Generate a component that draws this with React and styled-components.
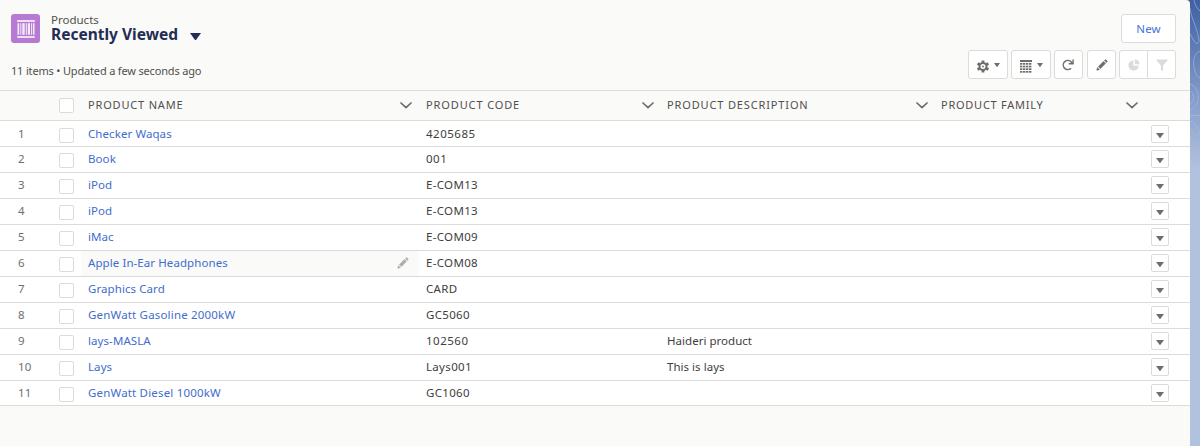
import React from 'react';
import styled, { createGlobalStyle } from 'styled-components';

const Global = createGlobalStyle`
  * { box-sizing: border-box; }
  body { margin: 0; font-family: "Noto Sans", "Open Sans", sans-serif; font-size: 11.5px; color: #3e3e3c; }
  svg { display: block; flex: none; }
`;

const Page = styled.div`
  position: relative;
  display: flex;
  height: 446px;
  overflow: hidden;
  background: linear-gradient(180deg, #3f60a4 0px, #6884ba 60px, #859dca 100px, #a3b6d8 145px, #b0c2de 170px);
`;
const Contours = styled.svg`
  position: absolute;
  top: 0;
  right: 0;
`;
const Panel = styled.main`
  position: relative;
  width: 1190px;
  height: 446px;
  background: #fafaf9;
  border-top-right-radius: 4px;
`;
const Header = styled.header`
  display: flex;
  justify-content: space-between;
  height: 90px;
  padding: 14px 14px 0 11px;
`;
const Heading = styled.div`
  display: flex;
  flex-direction: column;
`;
const TitleRow = styled.div`
  display: flex;
  gap: 11px;
  height: 50px;
`;
const ObjectIcon = styled.span`
  display: flex;
  align-items: center;
  justify-content: center;
  width: 29px;
  height: 29px;
  border-radius: 3px;
  background: #b67ad3;
`;
const Titles = styled.div`
  margin-top: -2px;
`;
const Kicker = styled.div`
  font-size: 11.5px;
  line-height: 15px;
  color: #514f4d;
`;
const ListName = styled.h1`
  display: flex;
  align-items: center;
  gap: 12px;
  margin: 0;
  font-size: 15.5px;
  line-height: 14px;
  font-weight: 700;
  color: #232d55;
  svg { margin-top: 4px; }
`;
const Summary = styled.div`
  font-size: 11px;
  line-height: 14px;
  letter-spacing: -0.17px;
  color: #514f4d;
`;
const Actions = styled.div`
  display: flex;
  flex-direction: column;
  align-items: flex-end;
  gap: 7px;
`;
const Button = styled.button`
  display: flex;
  align-items: center;
  justify-content: center;
  gap: 5px;
  width: ${p => p.$w}px;
  height: 29px;
  padding: 0;
  border: 1px solid #dddbda;
  border-radius: 3px;
  background: #fff;
  color: ${p => (p.$off ? '#dddbda' : '#706e6b')};
`;
const MenuTool = styled(Button)`
  padding-right: 0;
  svg:first-child { margin-top: 3px; }
`;
const RefreshTool = styled(Button)`
  padding-right: 1px;
  margin-right: 1px;
`;
const NewButton = styled(Button)`
  font: 11.5px "Noto Sans", sans-serif;
  letter-spacing: 0.1px;
  color: #4573d5;
`;
const Tools = styled.div`
  display: flex;
  gap: 3px;
`;
const Pair = styled.div`
  display: flex;
  button:first-child { border-radius: 3px 0 0 3px; }
  button:last-child { border-radius: 0 3px 3px 0; margin-left: -1px; }
`;
const Table = styled.section`
  border-top: 1px solid #dddbda;
`;
const Row = styled.div`
  display: grid;
  grid-template-columns: 51px 30px 338px 241px 274px 210px 1fr;
  height: ${p => p.$h || 26}px;
  padding-top: ${p => (p.$first ? 1 : 0)}px;
  border-bottom: 1px solid #dddbda;
  background: #fff;
`;
const HeadRow = styled(Row)`
  height: 30px;
  background: #fafaf9;
`;
const HeadCell = styled.div`
  display: flex;
  align-items: center;
  justify-content: space-between;
  padding: 0 ${p => p.$end}px 1px 7px;
  font-size: 11px;
  line-height: 26px;
  letter-spacing: ${p => p.$ls}px;
  color: #514f4d;
`;
const Cell = styled.div`
  display: flex;
  justify-content: space-between;
  padding: 0 10px 0 7px;
  line-height: 23px;
  white-space: nowrap;
  letter-spacing: ${p => p.$ls || 0}px;
  background: ${p => (p.$hover ? '#fafaf9' : 'transparent')};
  svg { margin-top: 6px; }
`;
const Index = styled.div`
  padding-left: 18px;
  line-height: 23px;
  letter-spacing: 0.2px;
  color: #706e6b;
`;
const Link = styled.a`
  color: #3f6dcd;
`;
const Check = styled.span`
  width: 15px;
  height: 15px;
  margin: ${p => p.$top || 6}px 0 0 8px;
  border: 1px solid #dddbda;
  border-radius: 2px;
  background: #fff;
`;
const MenuButton = styled.button`
  display: flex;
  justify-content: center;
  width: 18px;
  height: 18px;
  margin: 3px 0 0 7px;
  padding: 7px 0 0;
  border: 1px solid #dddbda;
  border-radius: 2px;
  background: #fff;
`;

const Caret = ({ w = 6, h = 4, color = '#706e6b' }) => (
  <svg width={w} height={h} viewBox="0 0 10 6" preserveAspectRatio="none"><path d="M0 0H10L5.6 5.7Q5 6.3 4.4 5.7Z" fill={color} /></svg>
);
const Chevron = () => (
  <svg width="12" height="7" viewBox="0 0 12 7"><path d="M1 1L6 5.7L11 1" fill="none" stroke="#706e6b" strokeWidth="1.7" strokeLinecap="round" strokeLinejoin="round" /></svg>
);
const Pencil = ({ size = 12, color = '#706e6b' }) => (
  <svg width={size} height={size} viewBox="0 0 52 52" fill={color}>
    <path d="M9.5 33.4l8.9 8.9c.4.4 1 .4 1.4 0L42 20c.4-.4.4-1 0-1.4l-8.8-8.8c-.4-.4-1-.4-1.4 0L9.5 32.1c-.4.4-.4 1 0 1.3zM36.1 5.7c-.4.4-.4 1 0 1.4l8.8 8.8c.4.4 1 .4 1.4 0l2.5-2.5c1.6-1.5 1.6-3.9 0-5.5l-4.7-4.7c-1.6-1.6-4.1-1.6-5.7 0l-2.3 2.5zM2.1 48.2c-.2 1 .7 1.9 1.7 1.7l10.9-2.6c.4-.1.7-.3.9-.5l.2-.2c.2-.2.3-.9-.1-1.3l-9-9c-.4-.4-1.1-.3-1.3-.1l-.2.2c-.3.3-.4.6-.5.9z" />
  </svg>
);
const Gear = () => (
  <svg width="12" height="13" viewBox="0 0 12 13" fill="none" stroke="#706e6b">
    <circle cx="6" cy="6.5" r="3.5" strokeWidth="2" />
    <path d="M6 .4V2.8M6 10.2V12.6M.6 3.4L2.9 4.7M9.1 8.3L11.4 9.6M.6 9.6L2.9 8.3M9.1 4.7L11.4 3.4" strokeWidth="2.8" />
    <circle cx="6" cy="6.5" r=".9" fill="#706e6b" stroke="none" />
  </svg>
);
const Grid = () => (
  <svg width="12" height="13" viewBox="0 0 12 13" fill="#706e6b">
    <rect width="12" height="2" />
    {[3, 5.7, 8.3, 11].map(y => [0, 3, 6, 9].map(x => <rect key={`${x}-${y}`} x={x} y={y} width="2.4" height="1.7" />))}
  </svg>
);
const Refresh = () => (
  <svg width="12" height="12" viewBox="0 0 12 12" fill="none" stroke="#706e6b" strokeWidth="1.5">
    <path d="M8.6 9.7A4.6 4.6 0 1 1 9.5 3.2L10.6 4.3" strokeLinecap="round" />
    <path d="M11.1 .9V4.7H7.3" strokeWidth="1.4" strokeLinejoin="round" strokeLinecap="round" />
  </svg>
);
const Pie = () => (
  <svg width="12" height="12" viewBox="0 0 12 12" fill="currentColor">
    <path d="M5.3 1.2V5.9Q5.3 6.7 6.1 6.7H10.8A5.2 5.2 0 1 1 5.3 1.2Z" />
    <path d="M6.8 .3Q11.2.8 11.7 5.2H7.3Q6.8 5.2 6.8 4.7Z" />
  </svg>
);
const Funnel = () => (
  <svg width="12" height="12" viewBox="0 0 12 12" fill="currentColor">
    <path d="M.5.5H11.5Q12 .8 11.6 1.3L7.1 6.4V11.2Q7 11.6 6.6 11.6H5.4Q5 11.6 4.9 11.2V6.4L.4 1.3Q0 .8.5.5Z" />
  </svg>
);
const Barcode = () => (
  <svg width="18" height="18" viewBox="0 0 18 18" fill="#fff">
    <rect y=".3" width="18" height="1.5" rx=".6" />
    <rect y="16.2" width="18" height="1.5" rx=".6" />
    <g fillOpacity=".85">
      <rect x=".5" y="3.2" width="1.7" height="11.6" />
      <rect x="3.3" y="3.2" width="1" height="11.6" />
      <rect x="5.3" y="3.2" width="2.4" height="11.6" />
      <rect x="8.8" y="3.2" width="1" height="11.6" />
      <rect x="10.8" y="3.2" width="2.2" height="11.6" />
      <rect x="14" y="3.2" width=".9" height="11.6" />
      <rect x="15.9" y="3.2" width="1.6" height="11.6" />
    </g>
  </svg>
);

const columns = [
  ['PRODUCT NAME', 0.82, 7],
  ['PRODUCT CODE', 0.88, 6],
  ['PRODUCT DESCRIPTION', 0.86, 6],
  ['PRODUCT FAMILY', 0.75, 6],
];
const products = [
  ['Checker Waqas', '4205685'],
  ['Book', '001'],
  ['iPod', 'E-COM13'],
  ['iPod', 'E-COM13'],
  ['iMac', 'E-COM09'],
  ['Apple In-Ear Headphones', 'E-COM08'],
  ['Graphics Card', 'CARD'],
  ['GenWatt Gasoline 2000kW', 'GC5060'],
  ['lays-MASLA', '102560', 'Haideri product'],
  ['Lays', 'Lays001', 'This is lays'],
  ['GenWatt Diesel 1000kW', 'GC1060'],
];

export default function App() {
  return (
    <Page>
      <Global />
      <Contours width="14" height="170" viewBox="0 0 14 170" fill="none" stroke="#a9bddf" strokeOpacity=".6">
        <path d="M4 8C5 18 12 30 13 40C13 45 10 44 8 41L3 32M8 0C9 5 11 9 14 11M14 51C8 54 7 60 8 67C9 74 12 78 14 78M4 84C15 88 15 106 4 110M4 91C9 94 9 102 4 104M3 115.5H14M4 121C9 122 12 128 14 134M4 148C8 145 11 152 14 157M4 150L8 165" />
        <path d="M5 129L12 136M4 137L12 145" strokeDasharray="3 2" />
      </Contours>
      <Panel>
        <Header>
          <Heading>
            <TitleRow>
              <ObjectIcon><Barcode /></ObjectIcon>
              <Titles>
                <Kicker>Products</Kicker>
                <ListName><span>Recently Viewed</span><Caret w={11} h={7} color="#232d55" /></ListName>
              </Titles>
            </TitleRow>
            <Summary>11 items • Updated a few seconds ago</Summary>
          </Heading>
          <Actions>
            <NewButton $w={55}>New</NewButton>
            <Tools>
              <MenuTool $w={40}><Gear /><Caret /></MenuTool>
              <MenuTool $w={40}><Grid /><Caret /></MenuTool>
              <RefreshTool $w={29}><Refresh /></RefreshTool>
              <Button $w={29}><Pencil /></Button>
              <Pair>
                <Button $w={29} $off><Pie /></Button>
                <Button $w={29} $off><Funnel /></Button>
              </Pair>
            </Tools>
          </Actions>
        </Header>
        <Table>
          <HeadRow>
            <span />
            <Check $top={7} />
            {columns.map(([name, ls, end]) => (
              <HeadCell key={name} $ls={ls} $end={end}><span>{name}</span><Chevron /></HeadCell>
            ))}
          </HeadRow>
          {products.map(([name, code, description], i) => (
            <Row key={i} $first={i === 0} $h={i === 10 ? 25 : 26}>
              <Index>{i + 1}</Index>
              <Check />
              <Cell $ls={name.startsWith('GenWatt') ? 0.18 : 0.08} $hover={i === 5}><Link>{name}</Link>{i === 5 && <Pencil color="#b0adab" />}</Cell>
              <Cell $ls={/^\d/.test(code) ? 0.5 : 0.32}>{code}</Cell>
              <Cell $ls={0.03}>{description}</Cell>
              <span />
              <MenuButton><Caret w={8} h={5} /></MenuButton>
            </Row>
          ))}
        </Table>
      </Panel>
    </Page>
  );
}
